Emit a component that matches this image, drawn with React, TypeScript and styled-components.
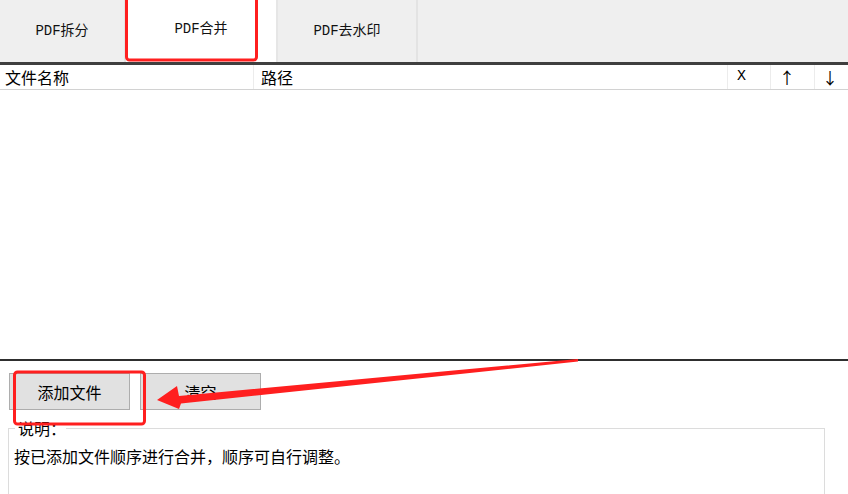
import styled, { createGlobalStyle } from "styled-components";

const GlobalStyle = createGlobalStyle`
  html, body {
    margin: 0;
    padding: 0;
    background: #ffffff;
  }
  body {
    font-family: "Noto Sans CJK SC", "Noto Sans", sans-serif;
    color: #000;
  }
`;

const tabs = [
  { label: "PDF拆分", width: 126 },
  { label: "PDF合并", width: 152, active: true },
  { label: "PDF去水印", width: 140 },
];

const columns = [
  { label: "文件名称", width: "254px", pad: 5 },
  { label: "路径", width: "474px", pad: 7 },
  { label: "X", width: "43px", pad: 9, mono: true },
  { label: "↑", width: "44px", pad: 8 },
  { label: "↓", width: "1fr", pad: 7 },
];

const App = () => {
  return (
    <Page>
      <GlobalStyle />
      <TabBar>
        {tabs.map((t) => (
          <Tab key={t.label} $width={t.width} $active={!!t.active}>
            {t.label}
          </Tab>
        ))}
      </TabBar>

      <Header $cols={columns.map((c) => c.width).join(" ")}>
        {columns.map((c) => (
          <HeadCell key={c.label} $pad={c.pad} $mono={!!c.mono}>
            {c.label}
          </HeadCell>
        ))}
      </Header>

      <ListArea />

      <BottomPanel>
        <ButtonRow>
          <Button>添加文件</Button>
          <Button>清空</Button>
        </ButtonRow>
        <Group>
          <Legend>说明：</Legend>
          <Desc>按已添加文件顺序进行合并，顺序可自行调整。</Desc>
        </Group>
      </BottomPanel>

      <Marks width="848" height="494" viewBox="0 0 848 494">
        <rect x="126.5" y="-10" width="130" height="70" rx="3" fill="none" stroke="#ff1f1f" strokeWidth="3" />
        <rect x="14.5" y="372" width="130" height="52" rx="3" fill="none" stroke="#ff1f1f" strokeWidth="3" />
        <polygon
          points="157,400 177,386 179,396 578,359 578,361.5 181,403.5 179,409"
          fill="#ff1f1f"
        />
      </Marks>
    </Page>
  );
};

export default App;

const Page = styled.div`
  position: relative;
  width: 848px;
  height: 494px;
  overflow: hidden;
  display: flex;
  flex-direction: column;
  background: #ffffff;
`;

const TabBar = styled.div`
  display: flex;
  height: 62px;
  flex-shrink: 0;
  background: #efefef;
  border-bottom: 3px solid #3f3f3f;
`;

const Tab = styled.div<{ $width: number; $active: boolean }>`
  width: ${({ $width }) => $width}px;
  display: flex;
  align-items: center;
  justify-content: center;
  box-sizing: border-box;
  padding-bottom: ${({ $active }) => ($active ? 8 : 4)}px;
  background: ${({ $active }) => ($active ? "#ffffff" : "#efefef")};
  border-right: 2px solid ${({ $active }) => ($active ? "#e6e6e6" : "#e3e3e3")};
  font-family: "Liberation Mono", "Noto Sans CJK SC", monospace;
  font-size: 14px;
  color: #111;
`;

const Header = styled.div<{ $cols: string }>`
  display: grid;
  grid-template-columns: ${({ $cols }) => $cols};
  height: 24px;
  flex-shrink: 0;
  border-bottom: 1px solid #d2d2d2;
  background: #ffffff;
`;

const HeadCell = styled.div<{ $pad: number; $mono: boolean }>`
  display: flex;
  align-items: center;
  padding-left: ${({ $pad }) => $pad}px;
  border-right: 1px solid #ececec;
  font-family: ${({ $mono }) =>
    $mono ? `"Liberation Mono", monospace` : `"Noto Sans CJK SC", sans-serif`};
  font-size: ${({ $mono }) => ($mono ? 15 : 16)}px;
  line-height: 24px;
  &:last-child {
    border-right: none;
  }
`;

const ListArea = styled.div`
  height: 269px;
  flex-shrink: 0;
  background: #ffffff;
  border-bottom: 2px solid #2e2e2e;
`;

const BottomPanel = styled.div`
  flex: 1;
  padding-top: 12px;
  background: #ffffff;
`;

const ButtonRow = styled.div`
  display: flex;
  gap: 10px;
  padding-left: 9px;
`;

const Button = styled.button`
  width: 121px;
  height: 37px;
  margin: 0;
  padding: 0;
  background: #e1e1e1;
  border: 1px solid #adadad;
  border-radius: 0;
  font-family: "Noto Sans CJK SC", sans-serif;
  font-size: 16px;
  color: #000;
`;

const Group = styled.fieldset`
  margin: 11px 23px 0 8px;
  padding: 0 5px;
  min-height: 90px;
  border: 1px solid #dcdcdc;
`;

const Legend = styled.legend`
  margin-left: 1px;
  padding: 0 0 0 3px;
  font-size: 16px;
  line-height: 14px;
`;

const Desc = styled.p`
  margin: 10px 0 0;
  font-size: 16px;
  line-height: 22px;
`;

const Marks = styled.svg`
  position: absolute;
  left: 0;
  top: 0;
  pointer-events: none;
`;
